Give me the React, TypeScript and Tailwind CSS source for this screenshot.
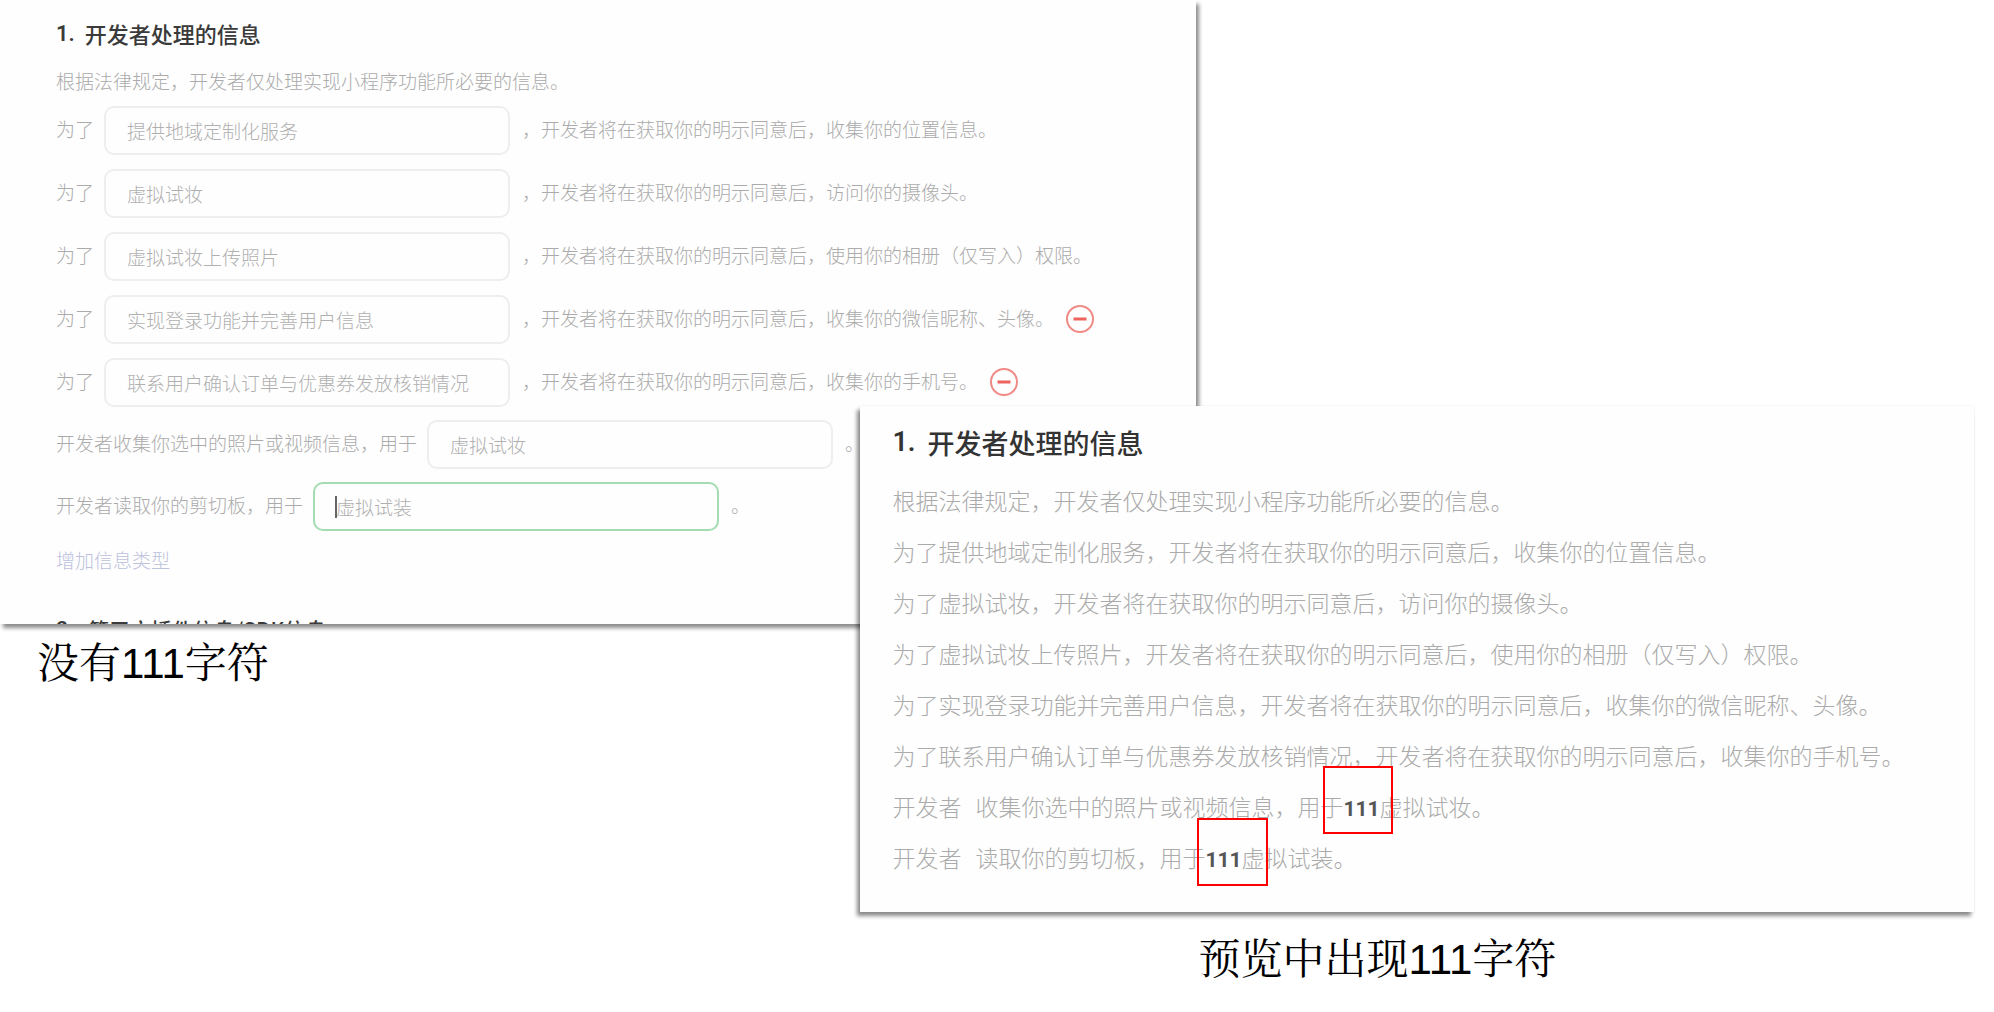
import React from 'react';
import { clsx } from 'clsx';

const purposes = [
  { id: 'location', value: '提供地域定制化服务', after: '，开发者将在获取你的明示同意后，收集你的位置信息。' },
  { id: 'camera', value: '虚拟试妆', after: '，开发者将在获取你的明示同意后，访问你的摄像头。' },
  { id: 'album', value: '虚拟试妆上传照片', after: '，开发者将在获取你的明示同意后，使用你的相册（仅写入）权限。' },
  { id: 'profile', value: '实现登录功能并完善用户信息', after: '，开发者将在获取你的明示同意后，收集你的微信昵称、头像。', removable: true },
  { id: 'phone', value: '联系用户确认订单与优惠券发放核销情况', after: '，开发者将在获取你的明示同意后，收集你的手机号。', removable: true },
];

const extras = [
  { id: 'media', before: '开发者收集你选中的照片或视频信息，用于', value: '虚拟试妆' },
  { id: 'clipboard', before: '开发者读取你的剪切板，用于', value: '虚拟试装', active: true },
];

const intro = '根据法律规定，开发者仅处理实现小程序功能所必要的信息。';

const RemoveButton = () => (
  <button type="button" aria-label="删除" className="ml-3 shrink-0 pb-[2px]">
    <svg width="28" height="28" viewBox="0 0 28 28" fill="none">
      <circle cx="14" cy="14" r="13" stroke="#f08a86" strokeWidth="2" />
      <path d="M7.5 14h13" stroke="#ec625c" strokeWidth="3" />
    </svg>
  </button>
);

type RowProps = {
  id: string;
  before: string;
  value: string;
  after: string;
  active?: boolean;
  removable?: boolean;
};

const Row = ({ id, before, value, after, active, removable }: RowProps) => (
  <div className="flex h-[49px] items-center whitespace-nowrap">
    <label htmlFor={id} className="pb-[2px]">{before}</label>
    <div className="relative ml-[10px] mr-3 shrink-0">
      <input
        id={id}
        type="text"
        placeholder={value}
        className={clsx(
          'block h-[49px] w-[406px] rounded-[10px] border-2 bg-transparent pl-[21px] placeholder:text-[#b0b0b0] outline-none',
          active ? 'border-[#a3dcb0]' : 'border-[#eeeeee]'
        )}
      />
      {active && <span className="absolute left-[22px] top-[14px] h-[22px] w-[2px] bg-[#666666]" />}
    </div>
    <span className="pb-[2px]">{after}</span>
    {removable && <RemoveButton />}
  </div>
);

const Editor = () => (
  <section className="w-[60%] bg-[#fefefe] pl-14 pt-[15px] text-[19px] font-light text-[#ababab] shadow-[3px_4px_4px_rgba(0,0,0,0.45)]">
    <h2 className="flex h-9 items-center gap-[10px] text-[22px] font-medium text-[#3a3a3a]">
      <span className="font-['Roboto',sans-serif] font-semibold">1.</span>
      <span>开发者处理的信息</span>
    </h2>
    <p className="mt-[14px] flex h-8 items-center whitespace-nowrap">{intro}</p>
    <div className="mt-[9px] flex flex-col gap-[14px]">
      {purposes.map((p) => (
        <Row key={p.id} before="为了" {...p} />
      ))}
    </div>
    <div className="mt-[13px] flex flex-col gap-[13px]">
      {extras.map((e) => (
        <Row key={e.id} after="。" {...e} />
      ))}
    </div>
    <a href="#add" className="mt-[13px] flex h-8 items-center text-[#bcc1dc]">增加信息类型</a>
    <div className="mt-[37px] h-[11px] overflow-hidden">
      <h2 className="flex h-8 items-center gap-[14px] text-[21px] font-medium leading-[28px] text-[#3a3a3a]">
        <span className="font-['Roboto',sans-serif] font-semibold">2.</span>
        <span>第三方插件信息/SDK信息</span>
      </h2>
    </div>
  </section>
);

const Preview = () => (
  <section className="relative bg-[#fefefe] pb-[29px] pl-8 pt-[18px] text-[23px] font-light leading-[51px] text-[#ababab] shadow-[-3px_4px_4px_rgba(0,0,0,0.45),0_0_2px_rgba(0,0,0,0.08)]">
    <h2 className="flex h-9 items-center gap-3 text-[27px] font-medium text-[#333333]">
      <span className="font-['Roboto',sans-serif] font-semibold">1.</span>
      <span>开发者处理的信息</span>
    </h2>
    <div className="mt-[15px] whitespace-nowrap">
      <p>{intro}</p>
      {purposes.map((p) => (
        <p key={p.id}>为了{p.value}{p.after}</p>
      ))}
      <p>
        开发者<span className="ml-[14px]">收集你选中的照片或视频信息，用于</span>
        <b className="font-['Roboto',sans-serif] text-[21px] font-bold leading-none text-[#555555]">111</b>虚拟试妆。
      </p>
      <p>
        开发者<span className="ml-[14px]">读取你的剪切板，用于</span>
        <b className="font-['Roboto',sans-serif] text-[21px] font-bold leading-none text-[#555555]">111</b>虚拟试装。
      </p>
    </div>
    {/* red highlight boxes over the stray characters */}
    <span className="absolute left-[463px] top-[360px] h-[68px] w-[70px] border-2 border-[#ff0000]" />
    <span className="absolute left-[337px] top-[412px] h-[68px] w-[71px] border-2 border-[#ff0000]" />
  </section>
);

export default function App() {
  return (
    <main className="relative min-h-screen overflow-hidden bg-white font-['Noto_Sans_CJK_SC',sans-serif]">
      <Editor />
      <p className="ml-[37px] mt-[10px] font-['Liberation_Sans','Noto_Serif_CJK_SC',serif] text-[42px] leading-[60px] text-black">
        没有111字符
      </p>
      <div className="absolute left-[43.15%] right-5 top-[406px]">
        <Preview />
        <p className="ml-[338px] mt-[18px] font-['Liberation_Sans','Noto_Serif_CJK_SC',serif] text-[42px] leading-[60px] text-black">
          预览中出现111字符
        </p>
      </div>
    </main>
  );
}
